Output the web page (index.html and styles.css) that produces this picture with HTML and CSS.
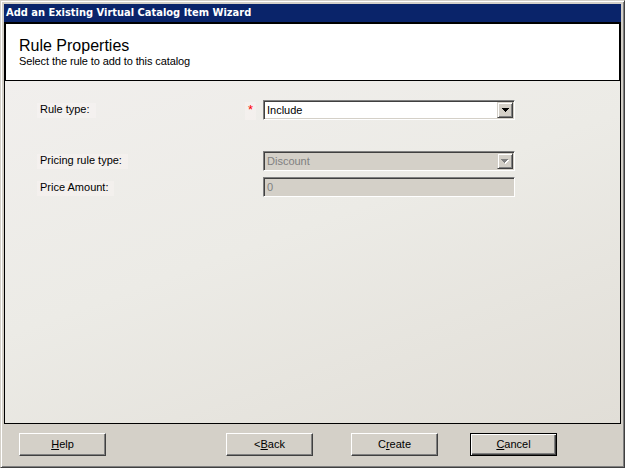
FILE: index.html
```html
<!DOCTYPE html>
<html>
<head>
<meta charset="utf-8">
<title>Add an Existing Virtual Catalog Item Wizard</title>
<link rel="stylesheet" href="styles.css">
</head>
<body>
<div class="window">
  <div class="titlebar">Add an Existing Virtual Catalog Item Wizard</div>
  <div class="header">
    <h1 class="header-title">Rule Properties</h1>
    <p class="header-sub">Select the rule to add to this catalog</p>
  </div>
  <div class="content">
    <div class="row">
      <div class="field-label"><span>Rule type:</span></div>
      <div class="req"><span>*</span></div>
      <div class="combo">
        <span class="combo-text">Include</span>
        <span class="combo-btn">
          <svg class="arrow" width="7" height="4" viewBox="0 0 7 4" shape-rendering="crispEdges"><rect x="0" y="0" width="7" height="1"/><rect x="1" y="1" width="5" height="1"/><rect x="2" y="2" width="3" height="1"/><rect x="3" y="3" width="1" height="1"/></svg>
        </span>
      </div>
    </div>
    <div class="row row-spaced">
      <div class="field-label"><span>Pricing rule type:</span></div>
      <div class="req"></div>
      <div class="combo disabled">
        <span class="combo-text">Discount</span>
        <span class="combo-btn">
          <svg class="arrow" width="8" height="5" viewBox="0 0 8 5" shape-rendering="crispEdges"><g fill="#ffffff"><rect x="1" y="1" width="7" height="1"/><rect x="2" y="2" width="5" height="1"/><rect x="3" y="3" width="3" height="1"/><rect x="4" y="4" width="1" height="1"/></g><g fill="#808080"><rect x="0" y="0" width="7" height="1"/><rect x="1" y="1" width="5" height="1"/><rect x="2" y="2" width="3" height="1"/><rect x="3" y="3" width="1" height="1"/></g></svg>
        </span>
      </div>
    </div>
    <div class="row">
      <div class="field-label field-label-low"><span>Price Amount:</span></div>
      <div class="req"></div>
      <div class="textbox disabled"><span class="combo-text">0</span></div>
    </div>
  </div>
  <div class="footer">
    <button class="btn"><u>H</u>elp</button>
    <button class="btn btn-back">&lt;<u>B</u>ack</button>
    <button class="btn btn-create">C<u>r</u>eate</button>
    <button class="btn btn-cancel btn-default"><u>C</u>ancel</button>
  </div>
</div>
</body>
</html>
```
FILE: styles.css
```css
* {
  box-sizing: border-box;
}

html,
body {
  margin: 0;
  padding: 0;
}

body {
  width: 625px;
  height: 468px;
  overflow: hidden;
  font-family: "Liberation Sans", Arial, sans-serif;
  font-size: 11px;
  color: #000;
  background: #d4d0c8;
}

.window {
  width: 625px;
  height: 468px;
  background: #d4d0c8;
  border: 1px solid;
  border-color: #d4d0c8 #404040 #404040 #d4d0c8;
  box-shadow: inset 1px 1px #ffffff, inset -1px -1px #808080;
  padding: 3px;
  display: flex;
  flex-direction: column;
}

.titlebar {
  height: 18px;
  flex: none;
  background: #0a246a;
  color: #ffffff;
  font-family: "DejaVu Sans Condensed", "DejaVu Sans", sans-serif;
  font-weight: bold;
  font-size: 11px;
  line-height: 18px;
  padding-left: 2px;
  white-space: nowrap;
}

.header {
  height: 59px;
  flex: none;
  background: #ffffff;
  border: 2px solid #000;
  border-bottom-width: 1px;
  padding: 13px 13px 0;
}

.header-title {
  margin: 0;
  font-size: 16px;
  font-weight: normal;
  line-height: 18px;
}

.header-sub {
  margin: 0;
  font-size: 11px;
  line-height: 13px;
  letter-spacing: -0.1px;
}

.content {
  flex: 1;
  border: 1px solid #000;
  border-top: 0;
  background: linear-gradient(160deg, #f1efed 0%, #ecebe6 45%, #e1ded7 100%);
  padding: 19px 0 0 32px;
}

.row {
  display: flex;
  height: 20px;
  margin-bottom: 6px;
}

.row-spaced {
  margin-top: 31px;
}

.field-label {
  width: 208px;
  padding-top: 3px;
}

.field-label-low {
  padding-top: 4px;
}

.field-label span {
  display: inline-block;
  height: 15px;
  line-height: 13px;
  padding: 0 6px 0 3px;
  background: rgba(255, 250, 250, 0.3);
}

.req {
  width: 18px;
  padding-top: 2px;
}

.req span {
  display: inline-block;
  height: 18px;
  padding: 0 3px;
  font-size: 13px;
  line-height: 15px;
  color: #ff0000;
  background: rgba(255, 250, 250, 0.3);
}

.combo,
.textbox {
  width: 252px;
  height: 20px;
  display: flex;
  background: #ffffff;
  border: 1px solid;
  border-color: #808080 #ffffff #ffffff #808080;
  box-shadow: inset 1px 1px #404040, inset -1px -1px #d4d0c8;
  padding: 1px;
}

.combo-text {
  flex: 1;
  padding-left: 2px;
  line-height: 16px;
  white-space: nowrap;
}

.combo-btn {
  width: 16px;
  height: 16px;
  flex: none;
  background: #d4d0c8;
  border: 1px solid;
  border-color: #d4d0c8 #404040 #404040 #d4d0c8;
  box-shadow: inset 1px 1px #ffffff, inset -1px -1px #808080;
  display: flex;
  align-items: center;
  justify-content: center;
}

.arrow {
  display: block;
}

.disabled {
  background: #d4d0c8;
  color: #808080;
}

.footer {
  height: 40px;
  flex: none;
  display: flex;
  align-items: flex-start;
  padding: 9px 0 0 15px;
}

.btn {
  width: 87px;
  height: 23px;
  padding: 0;
  margin: 0;
  font-family: "Liberation Sans", Arial, sans-serif;
  font-size: 11px;
  color: #000;
  background: #d4d0c8;
  border: 1px solid;
  border-color: #ffffff #404040 #404040 #ffffff;
  box-shadow: inset -1px -1px #808080;
  line-height: 13px;
}

.btn-back {
  margin-left: 120px;
}

.btn-create {
  margin-left: 38px;
}

.btn-cancel {
  margin-left: 32px;
}

.btn-default {
  border-color: #000;
  box-shadow: inset 1px 1px #ffffff, inset -1px -1px #404040, inset -2px -2px #808080;
}
```
